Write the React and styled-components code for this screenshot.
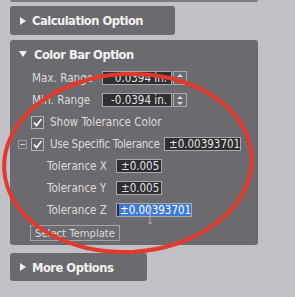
import React from "react";
import styled, { createGlobalStyle } from "styled-components";

const GlobalStyle = createGlobalStyle`
  html, body {
    margin: 0;
    padding: 0;
    background: #c1c0c5;
    overflow: hidden;
  }
  body {
    font-family: "DejaVu Sans Condensed", "DejaVu Sans", sans-serif;
  }
`;

const Page = styled.div`
  position: relative;
  width: 295px;
  height: 297px;
  padding-left: 10px;
  box-sizing: border-box;
`;

const TopStrip = styled.div`
  width: 248px;
  height: 2px;
  background: #7d7c80;
  border-radius: 0 0 3px 3px;
`;

const Header = styled.div`
  display: flex;
  align-items: center;
  width: ${(p) => p.width}px;
  height: ${(p) => p.height}px;
  margin-top: ${(p) => p.top}px;
  padding-left: 9px;
  box-sizing: border-box;
  background: #6b6a6e;
  border-radius: 3px;
  color: #f2f2f2;
  font-family: "DejaVu Sans Condensed", "DejaVu Sans", sans-serif;
  font-weight: bold;
  font-size: 12.8px;
  letter-spacing: -0.5px;
`;

const Arrow = styled.span`
  display: inline-block;
  width: 0;
  height: 0;
  margin-right: 7px;
  ${(p) =>
    p.open
      ? `border-left: 4px solid transparent;
         border-right: 4px solid transparent;
         border-top: 6px solid #f2f2f2;`
      : `border-top: 4px solid transparent;
         border-bottom: 4px solid transparent;
         border-left: 6px solid #f2f2f2;
         margin-left: 1px;
         margin-right: 6px;`}
`;

const Panel = styled.div`
  width: 248px;
  height: 205px;
  margin-top: 5px;
  background: #6b6a6e;
  border-radius: 3px;
  box-sizing: border-box;
`;

const PanelTitle = styled(Header)`
  background: transparent;
  height: 26px;
  margin-top: 0;
  padding-top: 2px;
`;

const Rows = styled.div`
  padding-top: 1px;
`;

const Row = styled.div`
  display: flex;
  align-items: center;
  height: 22px;
  padding-left: ${(p) => p.indent}px;
  color: #dcdcdc;
  font-size: 11.6px;
`;

const Label = styled.span`
  width: ${(p) => p.width}px;
  flex: none;
  white-space: nowrap;
  letter-spacing: ${(p) => (p.tight ? -0.3 : 0)}px;
`;

const Field = styled.div`
  width: ${(p) => p.width}px;
  height: 14px;
  flex: none;
  box-sizing: border-box;
  border: 1px solid #a9a8ab;
  background: #2f2e31;
  padding: 0 ${(p) => (p.selected ? 2 : 4)}px;
  display: flex;
  align-items: center;
  justify-content: ${(p) => (p.right ? "flex-end" : "flex-start")};
  color: #e6e6e6;
  font-size: 11.5px;
  line-height: 12px;
  white-space: nowrap;
  overflow: hidden;
`;

const Selection = styled.span`
  flex: 1;
  background: #3c7ad6;
  color: #ffffff;
  padding: 0 1px;
  height: 12px;
  line-height: 12px;
`;

const Spinner = styled.div`
  width: 14px;
  height: 14px;
  margin-left: 1px;
  box-sizing: border-box;
  border: 1px solid #a9a8ab;
  background: #6b6a6e;
  display: flex;
  flex-direction: column;
  align-items: center;
  justify-content: space-around;
`;

const SpinArrow = styled.span`
  width: 0;
  height: 0;
  border-left: 3px solid transparent;
  border-right: 3px solid transparent;
  ${(p) =>
    p.down
      ? `border-top: 3px solid #dcdcdc;`
      : `border-bottom: 3px solid #dcdcdc;`}
`;

const Check = styled.span`
  width: 13px;
  height: 13px;
  flex: none;
  box-sizing: border-box;
  border: 1px solid #b5b4b7;
  background: #636266;
  display: flex;
  align-items: center;
  justify-content: center;
  margin-right: 6px;
`;

const Collapse = styled.span`
  width: 9px;
  height: 9px;
  flex: none;
  box-sizing: border-box;
  border: 1px solid #9d9ca0;
  display: flex;
  align-items: center;
  justify-content: center;
  margin-right: 4px;

  &::after {
    content: "";
    width: 5px;
    height: 1px;
    background: #c8c8c8;
  }
`;

const ButtonRow = styled.div`
  padding: 4px 0 0 20px;
`;

const Button = styled.div`
  width: 90px;
  height: 16px;
  box-sizing: border-box;
  border: 1px solid #a3a2a6;
  background: #6d6c70;
  color: #dcdcdc;
  font-size: 11.2px;
  display: flex;
  align-items: center;
  justify-content: center;
  white-space: nowrap;
`;

const Overlay = styled.svg`
  position: absolute;
  left: 0;
  top: 0;
  pointer-events: none;
`;

const Tick = () => (
  <svg width="11" height="11" viewBox="0 0 11 11">
    <path d="M2 5.5 L4.5 8.5 L9.5 2" fill="none" stroke="#f4f4f4" strokeWidth="1.8" />
  </svg>
);

const RangeRow = ({ label, value }) => (
  <Row indent={22}>
    <Label width={70}>{label}</Label>
    <Field width={70} right>
      {value}
    </Field>
    <Spinner>
      <SpinArrow />
      <SpinArrow down />
    </Spinner>
  </Row>
);

const TolRow = ({ label, width, children }) => (
  <Row indent={37}>
    <Label width={69}>{label}</Label>
    <Field width={width} selected={label === "Tolerance Z"}>
      {children}
    </Field>
  </Row>
);

export default function App() {
  return (
    <>
      <GlobalStyle />
      <Page>
        <TopStrip />
        <Header width={165} height={29} top={4}>
          <Arrow />
          Calculation Option
        </Header>
        <Panel>
          <PanelTitle width={248} height={26} top={0}>
            <Arrow open />
            Color Bar Option
          </PanelTitle>
          <Rows>
            <RangeRow label="Max. Range" value="0.0394 in." />
            <RangeRow label="Min. Range" value="-0.0394 in." />
            <Row indent={21}>
              <Check>
                <Tick />
              </Check>
              Show Tolerance Color
            </Row>
            <Row indent={8}>
              <Collapse />
              <Check>
                <Tick />
              </Check>
              <Label width={114} tight>
                Use Specific Tolerance
              </Label>
              <Field width={77}>±0.00393701</Field>
            </Row>
            <TolRow label="Tolerance X" width={46}>
              ±0.005
            </TolRow>
            <TolRow label="Tolerance Y" width={46}>
              ±0.005
            </TolRow>
            <TolRow label="Tolerance Z" width={76}>
              <Selection>±0.00393701</Selection>
            </TolRow>
          </Rows>
          <ButtonRow>
            <Button>Select Template</Button>
          </ButtonRow>
        </Panel>
        <Header width={137} height={28} top={8}>
          <Arrow />
          More Options
        </Header>
        <Overlay width="295" height="297" viewBox="0 0 295 297">
          <ellipse
            cx="128"
            cy="163"
            rx="124"
            ry="89"
            transform="rotate(-3 128 163)"
            fill="none"
            stroke="#e3392a"
            strokeWidth="4"
          />
          <path
            d="M148 208 H152 M150 208 V223 M148 223 H152"
            stroke="#b4b4b4"
            strokeWidth="1"
            fill="none"
          />
        </Overlay>
      </Page>
    </>
  );
}
